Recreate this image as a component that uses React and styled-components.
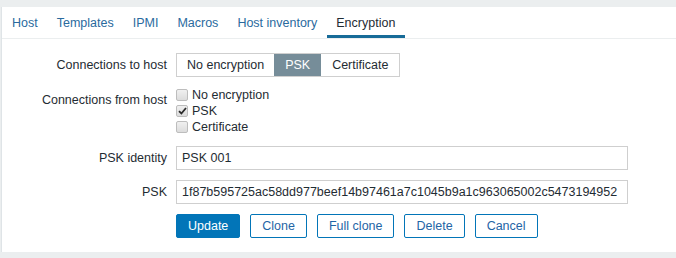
import React from "react";
import styled, { createGlobalStyle } from "styled-components";

const Global = createGlobalStyle`
  html, body { margin: 0; padding: 0; background: #ebeeef; }
  body { font-family: Arial, "Liberation Sans", sans-serif; font-size: 12.5px; color: #1f2c33; }
`;

const Page = styled.div`
  padding-top: 7px;
  padding-left: 1px;
  height: 258px;
  box-sizing: border-box;
  overflow: hidden;
`;

const Panel = styled.div`
  background: #ffffff;
  border-left: 1px solid #dfe4e7;
  height: 245px;
  box-sizing: border-box;
`;

const TabBar = styled.ul`
  display: flex;
  margin: 0;
  padding: 0 0 0 0.5px;
  list-style: none;
  border-bottom: 1px solid #ebeeef;
`;

const Tab = styled.li`
  height: 31px;
  box-sizing: border-box;
  padding: 4px 9.5px 0;
  display: flex;
  align-items: center;
  border-bottom: 3px solid ${(p) => (p.$active ? "#176b98" : "transparent")};
  color: ${(p) => (p.$active ? "#1f2c33" : "#2a6a9e")};
  white-space: nowrap;
`;

const Form = styled.div`
  display: grid;
  grid-template-columns: 165px 1fr;
  column-gap: 9px;
  row-gap: 10px;
  padding-top: 14px;
  align-items: start;
`;

const Label = styled.div`
  text-align: right;
  line-height: 24px;
  padding-top: ${(p) => p.$offset || 0}px;
  white-space: nowrap;
`;

const Segmented = styled.div`
  display: inline-flex;
  border: 1px solid #cfcfcf;
  height: 24px;
  box-sizing: border-box;
  justify-self: start;
`;

const Segment = styled.span`
  display: flex;
  align-items: center;
  padding: 0 ${(p) => (p.$first ? 10 : 11)}px;
  background: ${(p) => (p.$on ? "#768d99" : "#ffffff")};
  color: ${(p) => (p.$on ? "#ffffff" : "#1f2c33")};
  white-space: nowrap;
`;

const CheckList = styled.div`
  display: flex;
  flex-direction: column;
  padding-bottom: 1px;
`;

const CheckRow = styled.label`
  display: flex;
  align-items: center;
  height: 16px;
  gap: 4px;
`;

const Box = styled.span`
  width: 12px;
  height: 12px;
  box-sizing: border-box;
  border: 1px solid #bdbdbd;
  border-radius: 2px;
  background: linear-gradient(#f0f0f0, #dcdcdc);
  display: flex;
  align-items: center;
  justify-content: center;
`;

const TextInput = styled.div`
  width: 452px;
  height: 24px;
  box-sizing: border-box;
  border: 1px solid #cfcfcf;
  padding: 0 5px;
  display: flex;
  align-items: center;
  white-space: nowrap;
  overflow: hidden;
`;

const Buttons = styled.div`
  display: flex;
  gap: 10px;
  grid-column: 2;
`;

const Button = styled.button`
  height: 24px;
  padding: 0 11px;
  border-radius: 2px;
  font-family: Arial, "Liberation Sans", sans-serif;
  font-size: 12.5px;
  border: 1px solid #0275b8;
  background: ${(p) => (p.$primary ? "#0275b8" : "#ffffff")};
  color: ${(p) => (p.$primary ? "#ffffff" : "#1f65a6")};
  cursor: pointer;
`;

const Check = ({ checked, children }) => (
  <CheckRow>
    <Box>
      {checked && (
        <svg width="9" height="8" viewBox="0 0 9 8">
          <path d="M1 4.2 L3.4 6.5 L8 1" fill="none" stroke="#2b2b2b" strokeWidth="1.8" />
        </svg>
      )}
    </Box>
    {children}
  </CheckRow>
);

export default function App() {
  const tabs = ["Host", "Templates", "IPMI", "Macros", "Host inventory", "Encryption"];
  return (
    <Page>
      <Global />
      <Panel>
        <TabBar>
          {tabs.map((t) => (
            <Tab key={t} $active={t === "Encryption"}>{t}</Tab>
          ))}
        </TabBar>
        <Form>
          <Label>Connections to host</Label>
          <Segmented>
            <Segment $first>No encryption</Segment>
            <Segment $on>PSK</Segment>
            <Segment>Certificate</Segment>
          </Segmented>

          <Label $offset={1}>Connections from host</Label>
          <CheckList>
            <Check>No encryption</Check>
            <Check checked>PSK</Check>
            <Check>Certificate</Check>
          </CheckList>

          <Label>PSK identity</Label>
          <TextInput>PSK 001</TextInput>

          <Label>PSK</Label>
          <TextInput>1f87b595725ac58dd977beef14b97461a7c1045b9a1c963065002c5473194952</TextInput>

          <Buttons>
            <Button $primary>Update</Button>
            <Button>Clone</Button>
            <Button>Full clone</Button>
            <Button>Delete</Button>
            <Button>Cancel</Button>
          </Buttons>
        </Form>
      </Panel>
    </Page>
  );
}
